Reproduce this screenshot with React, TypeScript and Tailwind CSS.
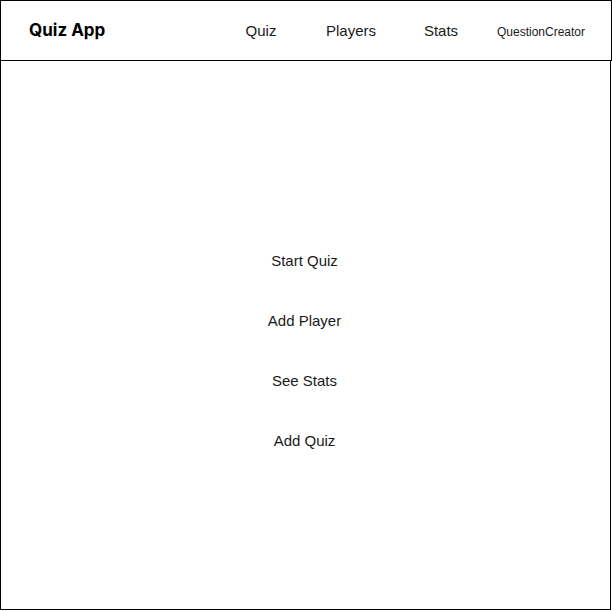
const navItems = [
  { label: 'Quiz', w: 'w-[90px]', size: 'text-[15px]' },
  { label: 'Players', w: 'w-[90px]', size: 'text-[15px]' },
  { label: 'Stats', w: 'w-[90px]', size: 'text-[15px]' },
  { label: 'QuestionCreator', w: 'w-[110px]', size: 'text-[12px]' },
]

const actions = ['Start Quiz', 'Add Player', 'See Stats', 'Add Quiz']

export default function App() {
  return (
    <div className="w-[612px] h-[611px] bg-white font-['Liberation_Sans',Arial,sans-serif] text-[#1a1a1a]">
      <header className="w-[612px] h-[61px] border border-black flex items-center">
        <div className="pl-[28px] w-[215px] pt-px font-['Inter',sans-serif] font-bold text-[17px] text-black">
          Quiz App
        </div>
        <nav className="flex items-center pt-[2px]">
          {navItems.map((item) => (
            <div key={item.label} className={`${item.w} ${item.size} text-center`}>
              {item.label}
            </div>
          ))}
        </nav>
      </header>
      <main className="w-[611px] h-[550px] -mt-px border border-black flex flex-col items-center pt-[170px] pr-[2px]">
        {actions.map((a) => (
          <div key={a} className="h-[60px] flex items-center text-[15px]">
            {a}
          </div>
        ))}
      </main>
    </div>
  )
}
